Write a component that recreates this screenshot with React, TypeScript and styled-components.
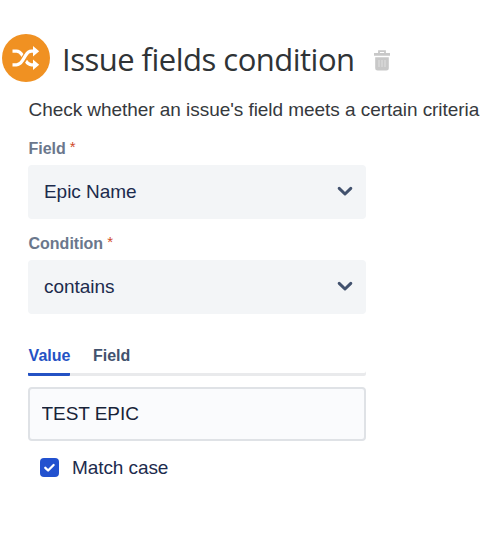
import React from "react";
import styled, { createGlobalStyle } from "styled-components";

const GlobalStyle = createGlobalStyle`
  * { box-sizing: border-box; }
  body {
    margin: 0;
    background: #fff;
    font-family: "Liberation Sans", Arial, sans-serif;
    overflow: hidden;
  }
`;

const Page = styled.main`
  width: 489px;
  height: 538px;
  padding: 34px 0 0 2px;
  white-space: nowrap;
`;

const Header = styled.header`
  display: flex;
  align-items: center;
  height: 48px;
`;

const Badge = styled.span`
  display: block;
  flex: none;
  width: 48px;
  height: 48px;
  border-radius: 50%;
  background: #f09122;
`;

const Title = styled.h1`
  width: 294px;
  margin: 2px 0 0 12px;
  font: 400 31px/44px "Open Sans", "Noto Sans", sans-serif;
  letter-spacing: -0.51px;
  color: #2f3336;
`;

const TrashButton = styled.button`
  display: block;
  width: 16px;
  height: 21px;
  margin: 4px 0 0 18px;
  padding: 0;
  border: 0;
  background: none;
`;

const Body = styled.section`
  display: flex;
  flex-direction: column;
  width: 338px;
  margin-left: 26px;
`;

const Description = styled.p`
  margin: 16px 0 0;
  padding-left: 0.5px;
  font-size: 19px;
  line-height: 24px;
  letter-spacing: -0.05px;
  color: #36393d;
`;

const Label = styled.label<{ $gap: number }>`
  display: flex;
  margin-top: ${(p) => p.$gap}px;
  padding-left: 0.5px;
  height: 20px;
  font-size: 16px;
  font-weight: 700;
  line-height: 20px;
  color: #6b778c;
`;

const Required = styled.span`
  margin-left: 4px;
  font-size: 15px;
  font-weight: 400;
  line-height: 16px;
  color: #d04a2a;
`;

const Select = styled.div`
  display: flex;
  align-items: center;
  justify-content: space-between;
  height: 54px;
  margin-top: 6px;
  padding: 0 13px 0 16px;
  border-radius: 4px;
  background: #f3f5f7;
  font-size: 19px;
  letter-spacing: -0.05px;
  color: #1c2b4d;
`;

const Tabs = styled.div`
  display: flex;
  gap: 22px;
  height: 31px;
  margin-top: 31px;
  box-shadow: inset 0 -3px #e9eaec;
  border-radius: 2px;
`;

const Tab = styled.button<{ $active?: boolean }>`
  height: 31px;
  padding: 1px 0 7px 0.6px;
  border: 0;
  border-bottom: 3px solid ${(p) => (p.$active ? "#2452c4" : "transparent")};
  border-radius: 1px;
  background: none;
  font: 700 16px/20px "Liberation Sans", Arial, sans-serif;
  color: ${(p) => (p.$active ? "#2452c4" : "#42526e")};
`;

const TextInput = styled.input`
  width: 338px;
  height: 54px;
  margin-top: 11px;
  padding: 0 11.5px;
  border: 2px solid #dfe2e6;
  border-radius: 4px;
  outline: 0;
  background: #fafbfd;
  font: 19px "Liberation Sans", Arial, sans-serif;
  letter-spacing: -0.05px;
  color: #172338;
`;

const CheckRow = styled.label`
  display: flex;
  align-items: center;
  gap: 13px;
  height: 24px;
  margin: 15px 0 0 12px;
  font-size: 19px;
  line-height: 24px;
  letter-spacing: -0.08px;
  color: #1c2b4d;
`;

const CheckBox = styled.span`
  display: block;
  width: 19px;
  height: 19px;
  margin-top: -1px;
  border-radius: 4px;
  background: #2251cf;
`;

const Chevron = () => (
  <svg width="16" height="12" viewBox="0 0 16 12" fill="none" stroke="#42526e" strokeWidth="3" strokeLinecap="round" strokeLinejoin="round">
    <path d="M2.2 2.4 8 8 13.8 2.4" />
  </svg>
);

const ShuffleIcon = () => (
  <svg width="48" height="48" viewBox="0 0 48 48" display="block" fill="none">
    <path stroke="#fff" strokeWidth="3.2" d="M10.5 17.2h4c2.7 0 4.2 1.5 5.8 4l3.5 5.6c1.5 2.7 3.3 4 5.7 4h2.5" />
    <path stroke="#f09122" strokeWidth="6" d="m19.2 29 7.2-11" />
    <path stroke="#fff" strokeWidth="3.2" d="M10.5 30.8h4c2.7 0 4.2-1.3 5.8-4l3.5-5.6c1.5-2.7 3.3-4 5.7-4h2.5" />
    <path fill="#fff" d="m31 12 6.2 5.2-6.2 5.2zM31 25.6l6.2 5.2-6.2 5.2z" />
  </svg>
);

const TrashIcon = () => (
  <svg width="16" height="21" viewBox="0 0 16 21" display="block">
    <path d="M5 3V1.2h6V3" fill="none" stroke="#c8c8c8" strokeWidth="1.8" />
    <path d="M0 3h16v2.8H0zM1.2 7.2h13.6V18a2.5 2.5 0 0 1-2.5 2.5H3.7A2.5 2.5 0 0 1 1.2 18z" fill="#c8c8c8" />
    <path d="M5 10v7M8 10v7M11 10v7" stroke="#e0e0e0" />
  </svg>
);

const CheckIcon = () => (
  <svg width="19" height="19" viewBox="0 0 19 19" display="block" fill="none" stroke="#fff" strokeWidth="2.3" strokeLinecap="round" strokeLinejoin="round">
    <path d="m5.3 9.8 2.8 2.7 5.5-5.5" />
  </svg>
);

export default function App() {
  return (
    <Page>
      <GlobalStyle />
      <Header>
        <Badge><ShuffleIcon /></Badge>
        <Title>Issue fields condition</Title>
        <TrashButton aria-label="Delete"><TrashIcon /></TrashButton>
      </Header>
      <Body>
        <Description>Check whether an issue's field meets a certain criteria</Description>
        <Label $gap={17}>Field<Required>*</Required></Label>
        <Select>Epic Name<Chevron /></Select>
        <Label $gap={15}>Condition<Required>*</Required></Label>
        <Select>contains<Chevron /></Select>
        <Tabs>
          <Tab $active>Value</Tab>
          <Tab>Field</Tab>
        </Tabs>
        <TextInput defaultValue="TEST EPIC" aria-label="Value" />
        <CheckRow><CheckBox><CheckIcon /></CheckBox>Match case</CheckRow>
      </Body>
    </Page>
  );
}
